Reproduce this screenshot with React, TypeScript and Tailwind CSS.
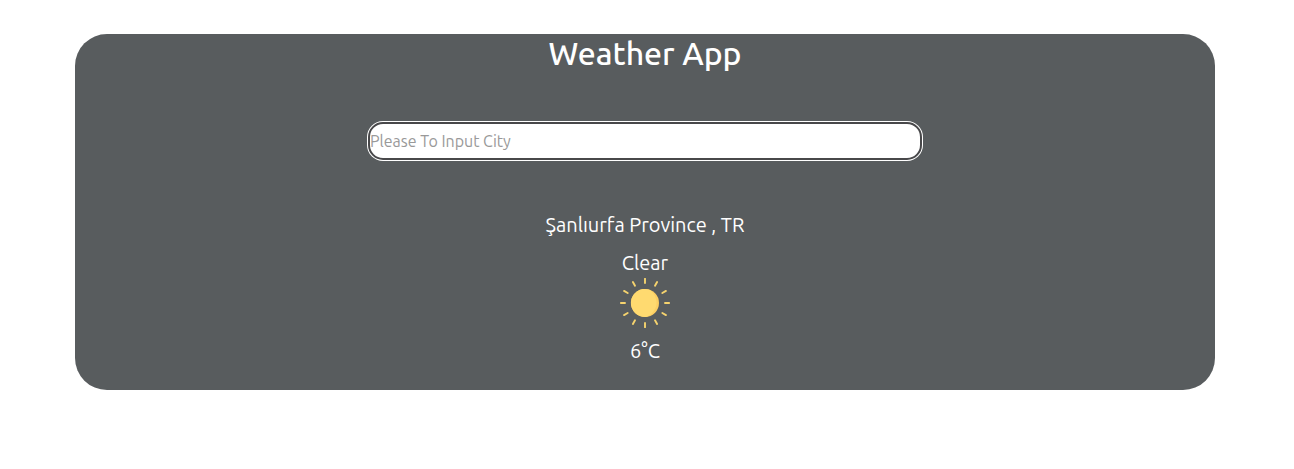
import { useState } from "react";

const rays = [0, 30, 60, 90, 120, 150, 180, 210, 240, 270, 300, 330];

function SunIcon() {
  return (
    <svg viewBox="0 0 50 50" className="size-[50px]" role="img" aria-label="Clear">
      {rays.map((angle) => (
        <path
          key={angle}
          d="M25 0.8V5"
          stroke="#f5d36e"
          strokeWidth="1.9"
          strokeLinecap="round"
          transform={`rotate(${angle} 25 25)`}
        />
      ))}
      <circle cx="25" cy="25" r="14" fill="#fdcf62" />
      <path d="M29 11.6A14 14 0 1 0 27 38.8C34.5 35 38 28 36 21C35 17 32.5 13.5 29 11.6Z" fill="#ffda70" />
    </svg>
  );
}

export default function App() {
  const [city, setCity] = useState("");

  return (
    <main className="pt-[34px] pr-[79px] pl-[75px] font-['Ubuntu','Noto_Sans',sans-serif]">
      <section className="flex flex-col items-center rounded-[32px] bg-[#585c5e] pb-6 text-xl text-white">
        <h1 className="text-[32px] leading-[38px] font-medium">Weather App</h1>
        <input
          type="text"
          aria-label="City"
          placeholder="Please To Input City"
          value={city}
          onChange={(event) => setCity(event.target.value)}
          className="mt-[52px] h-[34px] w-[550px] max-w-full rounded-[13px] bg-white text-base text-black shadow-[0_0_0_3px_#fff] outline-2 outline-[#48484a] placeholder:text-[#999]"
        />
        <p className="mt-[52px] leading-[30px]">Şanlıurfa Province , TR</p>
        <p className="mt-2 leading-[30px]">Clear</p>
        <SunIcon />
        <p className="mt-2 leading-[30px]">6°C</p>
      </section>
    </main>
  );
}
